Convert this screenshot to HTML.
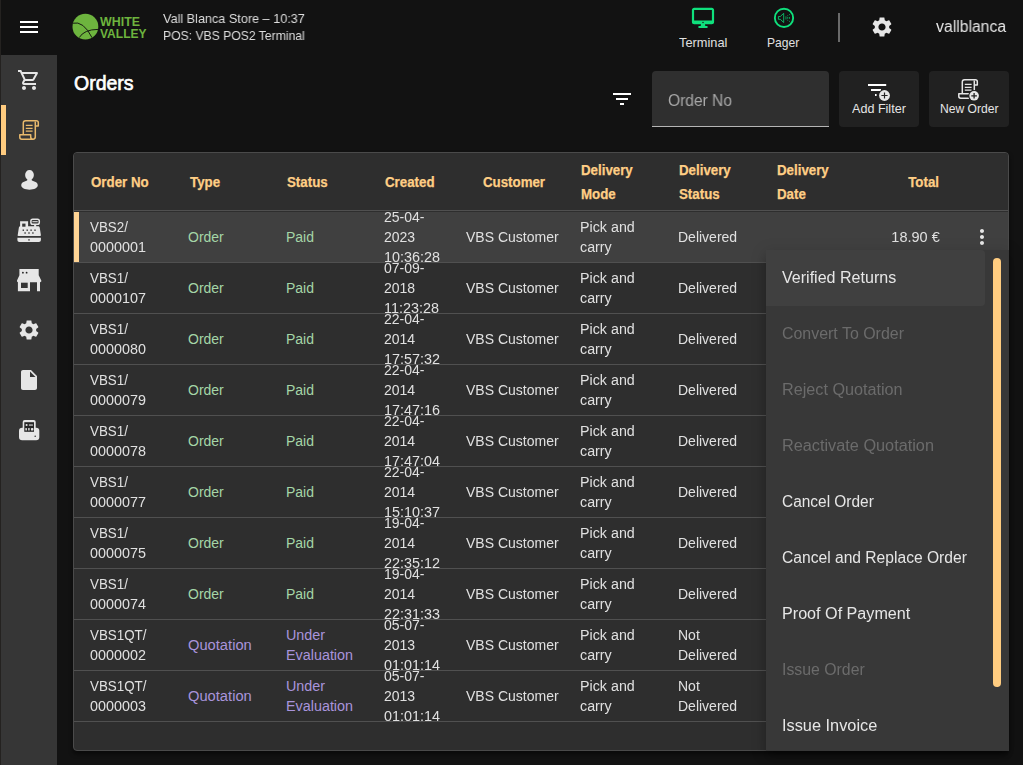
<!DOCTYPE html>
<html lang="en">
<head>
<meta charset="utf-8">
<title>Orders</title>
<style>
*{box-sizing:border-box;margin:0;padding:0}
html,body{width:1023px;height:765px;overflow:hidden;background:#121212}
body{position:relative;font-family:"Liberation Sans",sans-serif;color:#e0e0e0;font-size:14px;-webkit-font-smoothing:antialiased}
.abs{position:absolute}
.t{position:absolute;white-space:nowrap;line-height:1;transform-origin:0 50%}
svg{display:block}
/* sidebar */
#side{position:absolute;left:1px;top:55px;width:56px;height:710px;background:#363636}
#side .it{position:absolute;left:0;width:56px;height:50px}
#side .act{position:absolute;left:0;top:50px;width:5px;height:50px;background:#ffcc80}
/* top bar */
#edge{position:absolute;left:0;top:0;width:1px;height:765px;background:#242220}
/* card */
#card{position:absolute;left:73px;top:152px;width:936px;height:599px;background:#2e2e2e;border:1px solid #4a4a4a;border-radius:4px;box-shadow:0 3px 4px rgba(0,0,0,.5);overflow:hidden}
#hdr{position:absolute;left:0;top:0;width:934px;height:58px;background:#2e2e2e;border-bottom:1px solid #505050}
.h{position:absolute;color:#ffce85;-webkit-text-stroke:.25px #ffce85;font-weight:bold;font-size:14px;line-height:24px;white-space:nowrap;transform:scaleX(.95);transform-origin:0 50%}
#rows{position:absolute;left:0;top:0;width:934px;height:597px}
.gs{will-change:transform}
.row{position:absolute;left:0;width:934px;height:51px;border-bottom:1px solid #505050;overflow:hidden}
.row.sel{background:#404040}
.row.sel:before{content:"";position:absolute;left:0;top:0;width:5px;height:50px;background:#ffd494}
.c{position:absolute;top:0;height:50px;display:flex;align-items:center;line-height:20px;font-size:14px;white-space:nowrap}
.c>span{display:block}
.c u{display:block;text-decoration:none;transform-origin:0 50%}
.c u.l1{transform:scaleX(.955)}
.c u.l2{transform:scaleX(1.025)}
.c u.l3{transform:scaleX(1.028)}
.c{will-change:transform}
.c.g{color:#a5d6a7;will-change:auto}
.c.p{color:#a994dc;will-change:auto}
/* menu */
#menu{will-change:transform;position:absolute;left:766px;top:250px;width:243px;height:501px;background:#383838;box-shadow:0 5px 5px -3px rgba(0,0,0,.2),0 8px 10px 1px rgba(0,0,0,.14),0 3px 14px 2px rgba(0,0,0,.12);overflow:hidden}
#menu .mi{position:absolute;left:0;width:219px;height:56px;font-size:16px;line-height:56px;padding-left:16px;white-space:nowrap;color:#e6e6e6}
#menu .mi.d{color:#6b6b6b}
#menu .mi span{display:inline-block;transform-origin:0 50%}
#menu .mi.hv{background:#404040;border-radius:0 4px 4px 0}
#thumb{position:absolute;left:227px;top:8px;width:8px;height:429px;border-radius:4px;background:#ffcc80}
</style>
</head>
<body>
<div id="edge"></div>

<!-- TOPBAR -->
<svg class="abs" style="left:17px;top:15px" width="24" height="24" viewBox="0 0 24 24"><path fill="#fff" d="M3 18h18v-2H3v2zm0-5h18v-2H3v2zm0-7v2h18V6H3z"/></svg>
<!-- LOGO -->
<svg class="abs" id="logo" style="left:72px;top:13px" width="80" height="28" viewBox="0 0 80 28">
<circle cx="13.400" cy="13.650" r="12.900" fill="#6db43e"/>
<path d="M.5 10.200Q11.500 7.450 20.100 24.800M7.200 24.600Q12 16.500 26 16.400" fill="none" stroke="#161a12" stroke-width="1"/>
<text x="28" y="12.7" font-family="Liberation Sans, sans-serif" font-weight="bold" font-size="12.6" fill="#6db43e" textLength="40" lengthAdjust="spacingAndGlyphs">WHITE</text>
<text x="28" y="24.9" font-family="Liberation Sans, sans-serif" font-weight="bold" font-size="12.6" fill="#6db43e" textLength="46.5" lengthAdjust="spacingAndGlyphs">VALLEY</text>
</svg>
<div class="t gs" id="tb1" style="left:163.300px;top:12px;font-size:13px;color:#dedede;transform:scaleX(.973)">Vall Blanca Store – 10:37</div>
<div class="t gs" id="tb2" style="left:162.500px;top:29px;font-size:13px;color:#dedede;transform:scaleX(0.936)">POS: VBS POS2 Terminal</div>

<!-- terminal icon -->
<svg class="abs" id="ic-term" style="left:691px;top:6px" width="24" height="24" viewBox="0 0 24 24"><path fill="#0fe07c" fill-rule="evenodd" d="M3.200 1.800H20.800C22.100 1.800 23.100 2.800 23.100 4.100V15.900C23.100 17.200 22.100 18.200 20.800 18.200H14L14.300 20.100H15.700C16.300 20.100 16.700 20.500 16.700 21.100S16.300 22.100 15.700 22.100H8.300C7.700 22.100 7.300 21.700 7.300 21.100S7.700 20.100 8.300 20.100H9.700L10 18.200H3.200C1.900 18.200 .9 17.200 .9 15.900V4.100C.9 2.800 1.900 1.800 3.200 1.800ZM3.100 4.100V14.500H20.900V4.100ZM12 15.800A.7 .7 0 1 0 12 17.200A.7 .7 0 1 0 12 15.800Z"/></svg>
<div class="t" id="tterm" style="left:678.500px;top:36px;font-size:13px;color:#e0e0e0;transform:scaleX(0.984)">Terminal</div>
<!-- pager icon -->
<svg class="abs" id="ic-pager" style="left:773px;top:7px" width="22" height="22" viewBox="0 0 22 22"><circle cx="11" cy="10.900" r="9.150" fill="none" stroke="#0fe07c" stroke-width="1.900"/><path fill="none" stroke="#0cc46c" stroke-width=".9" stroke-linejoin="round" d="M5.400 9.500h1.900l3.400-3.200v9.200l-3.400-3.200H5.400z"/><g fill="#0aa85c"><rect x="12.500" y="9.300" width=".9" height="3.200"/><rect x="14.300" y="8.300" width=".9" height=".9"/><rect x="14.300" y="10" width=".9" height="1.800"/><rect x="14.300" y="12.800" width=".9" height=".9"/><rect x="16.100" y="7.200" width=".9" height=".9"/><rect x="16.100" y="10" width=".9" height="1.800"/><rect x="16.100" y="13.900" width=".9" height=".9"/></g></svg>
<div class="t" id="tpager" style="left:767px;top:36px;font-size:13px;color:#e0e0e0;transform:scaleX(0.93)">Pager</div>
<div class="abs" style="left:838px;top:13px;width:2px;height:29px;background:#6a6a6a"></div>
<svg class="abs" id="ic-gear" style="left:870px;top:15px" width="24" height="24" viewBox="0 0 24 24"><path fill="#e6e6e6" d="M19.14 12.94c.04-.3.06-.61.06-.94 0-.32-.02-.64-.07-.94l2.030-1.580c.18-.14.23-.41.12-.61l-1.920-3.320c-.12-.22-.37-.29-.59-.22l-2.390.96c-.5-.38-1.030-.7-1.620-.94l-.36-2.540c-.04-.24-.24-.41-.48-.41h-3.840c-.24 0-.43.17-.47.41l-.36 2.540c-.59.24-1.130.57-1.620.94l-2.390-.96c-.22-.08-.47 0-.59.22L2.740 8.870c-.12.21-.08.47.12.61l2.030 1.580c-.05.3-.09.63-.09.94s.02.64.07.94l-2.030 1.580c-.18.14-.23.41-.12.61l1.920 3.320c.12.22.37.29.59.22l2.390-.96c.5.38 1.030.7 1.620.94l.36 2.540c.05.24.24.41.48.41h3.840c.24 0 .44-.17.47-.41l.36-2.540c.59-.24 1.130-.56 1.620-.94l2.390.96c.22.08.47 0 .59-.22l1.920-3.320c.12-.22.07-.47-.12-.61l-2.010-1.580zM12 15.600c-1.980 0-3.600-1.620-3.600-3.600s1.620-3.600 3.600-3.600 3.600 1.620 3.600 3.600-1.620 3.600-3.600 3.600z"/></svg>
<div class="t gs" id="tuser" style="left:936px;top:19px;font-size:16px;color:#e6e6e6;transform:scaleX(0.986)">vallblanca</div>

<!-- SIDEBAR -->
<div id="side">
  <div class="act"></div>
  <!-- cart -->
  <svg class="abs" style="left:16px;top:13px" width="24" height="24" viewBox="0 0 24 24"><path fill="#e6e6e6" d="M15.550 13c.75 0 1.410-.41 1.750-1.030l3.580-6.490c.37-.66-.11-1.480-.87-1.480H5.210l-.94-2H1v2h2l3.600 7.590-1.350 2.440C4.520 15.370 5.480 17 7 17h12v-2H7l1.100-2h7.450zM6.160 6h12.150l-2.760 5H8.530L6.160 6zM7 18c-1.100 0-1.990.9-1.990 2S5.900 22 7 22s2-.9 2-2-.9-2-2-2zm10 0c-1.100 0-1.990.9-1.990 2s.89 2 1.990 2 2-.9 2-2-.9-2-2-2z"/></svg>
  <!-- orders scroll -->
  <svg class="abs" style="left:18px;top:65px" width="21" height="20" viewBox="0 0 21 20" fill="none" stroke="#e8b96c" stroke-width="1.500" stroke-linejoin="round"><path d="M4.3 14.2V3Q4.3 .8 6.500 .8H17.300Q19.300 .8 19.300 2.800V6H16.300" /><path d="M16.300 1.500V16.800Q16.300 19.200 14 19.200H2.700Q.8 19.200 .8 17.300V14.800H11.700V16.800Q11.700 19.200 14 19.200"/><path d="M6.800 5.400H13.600M6.800 8.300H13.600M6.800 11.200H13.600" stroke-width="1.3"/></svg>
  <!-- person -->
  <svg class="abs" style="left:16px;top:113px" width="24" height="24" viewBox="0 0 24 24"><path fill="#e6e6e6" transform="translate(12.500 .2) scale(.93 .985) translate(-12.500 0)" d="M12.500 1.800c2.700 0 4.700 2.100 4.700 4.900 0 2-.9 3.600-2.200 4.600-.3.300-.3.900.1 1.100l3.900 1.700c1.500.7 2.400 1.800 2.400 3.200 0 2.600-3.900 4.500-8.900 4.500s-8.900-1.900-8.900-4.500c0-1.400.9-2.500 2.400-3.200l3.900-1.700c.4-.2.400-.8.100-1.100-1.300-1-2.200-2.600-2.200-4.600 0-2.800 2-4.900 4.700-4.900z"/></svg>
  <!-- cash register -->
  <svg class="abs" style="left:16px;top:163px" width="24" height="24" viewBox="0 0 24 24">
    <rect x="13.900" y="1.300" width="8.400" height="4.900" rx="1.800" fill="none" stroke="#e6e6e6" stroke-width="1.500"/>
    <rect x="15.400" y="3.200" width="5.300" height="1" fill="#e6e6e6"/>
    <rect x="17.100" y="6.500" width="2.100" height="2.400" fill="#e6e6e6"/>
    <path fill="#e6e6e6" d="M3.100 3.200h8v6H3.100zM3.600 8.200h17.400c.9 0 1.500.5 1.700 1.300l1.200 7.500c.1.500-.2.900-.7.900H1.400c-.5 0-.8-.4-.7-.9l1.200-7.500c.2-.8.800-1.300 1.700-1.300zM.4 19.700h23.500v2.300c0 1.100-.9 2-2 2H2.400c-1.100 0-2-.9-2-2z"/>
    <g fill="#363636"><rect x="5.200" y="5.600" width="3.300" height="3.100"/><rect x="5.600" y="11.500" width="1.400" height="1.400"/><rect x="9.500" y="11.500" width="1.400" height="1.400"/><rect x="13.400" y="11.500" width="1.400" height="1.400"/><rect x="17.300" y="11.500" width="1.400" height="1.400"/><rect x="7.400" y="14.300" width="1.400" height="1.400"/><rect x="11.300" y="14.300" width="1.400" height="1.400"/><rect x="15.200" y="14.300" width="1.400" height="1.400"/><rect x="11.100" y="21.200" width="1.800" height="1.300" rx=".5"/></g>
  </svg>
  <!-- store -->
  <svg class="abs" style="left:16px;top:214px" width="25" height="23" viewBox="0 0 25 23">
    <path fill="#e6e6e6" d="M2.400 0H21.700V6.200L24.300 11.500V12.400L23.200 13.300H23V22.200H20V13.300H13V22.200H.9V13.300L0 12.400V11.500L2.400 6.200z"/>
    <rect x="4" y="13.700" width="6.700" height="5.300" fill="#363636"/>
    <circle cx="5.900" cy="3.700" r=".9" fill="#222"/><circle cx="9.600" cy="3.700" r=".9" fill="#222"/>
  </svg>
  <!-- settings -->
  <svg class="abs" style="left:16px;top:263px" width="24" height="24" viewBox="0 0 24 24"><path fill="#e6e6e6" d="M19.14 12.94c.04-.3.06-.61.06-.94 0-.32-.02-.64-.07-.94l2.030-1.580c.18-.14.23-.41.12-.61l-1.920-3.320c-.12-.22-.37-.29-.59-.22l-2.390.96c-.5-.38-1.030-.7-1.620-.94l-.36-2.540c-.04-.24-.24-.41-.48-.41h-3.840c-.24 0-.43.17-.47.41l-.36 2.540c-.59.24-1.130.57-1.620.94l-2.390-.96c-.22-.08-.47 0-.59.22L2.740 8.870c-.12.21-.08.47.12.61l2.030 1.580c-.05.3-.09.63-.09.94s.02.64.07.94l-2.030 1.580c-.18.14-.23.41-.12.61l1.920 3.320c.12.22.37.29.59.22l2.390-.96c.5.38 1.030.7 1.620.94l.36 2.540c.05.24.24.41.48.41h3.840c.24 0 .44-.17.47-.41l.36-2.540c.59-.24 1.130-.56 1.620-.94l2.390.96c.22.08.47 0 .59-.22l1.920-3.320c.12-.22.07-.47-.12-.61l-2.010-1.580zM12 15.600c-1.980 0-3.600-1.620-3.600-3.600s1.620-3.600 3.600-3.600 3.600 1.620 3.600 3.600-1.620 3.600-3.600 3.600z"/></svg>
  <!-- file -->
  <svg class="abs" style="left:16px;top:313px" width="24" height="24" viewBox="0 0 24 24"><path fill="#e6e6e6" d="M6 2c-1.100 0-1.990.9-1.990 2L4 20c0 1.100.89 2 1.990 2H18c1.100 0 2-.9 2-2V8l-6-6H6zm7 7V3.500L18.500 9H13z"/></svg>
  <!-- printer -->
  <svg class="abs" style="left:18px;top:365px" width="21" height="21" viewBox="0 0 21 21">
    <rect x="0" y="7.800" width="20.300" height="12.500" rx="3.200" fill="#e6e6e6"/>
    <rect x="3.700" y="0" width="13" height="12.500" rx="2" fill="#e6e6e6"/>
    <rect x="5.300" y="2.200" width="9.700" height="9.600" fill="#262626"/>
    <g fill="#e6e6e6"><circle cx="7.600" cy="5" r="1.050"/><rect x="9.900" y="4.500" width="4" height="1.100"/><rect x="6.400" y="7.900" width="1.500" height="2.700" rx=".6"/><rect x="9.200" y="7.900" width="1.400" height="2.700" rx=".5"/><rect x="11.900" y="7.900" width="2.500" height="2.700" rx=".9"/></g>
    <circle cx="16.200" cy="16.200" r=".8" fill="#363636"/>
  </svg>
</div>

<!-- TITLE + FILTER ROW -->
<div class="t" id="ttitle" style="left:73.600px;top:73px;font-size:20px;color:#fff;-webkit-text-stroke:.65px #fff;transform:scaleX(.975)">Orders</div>
<svg class="abs" style="left:610px;top:87px" width="24" height="24" viewBox="0 0 24 24"><path fill="#fff" d="M10 18h4v-2h-4v2zM3 6v2h18V6H3zm3 7h12v-2H6v2z"/></svg>
<div class="abs" style="left:652px;top:71px;width:177px;height:56px;background:#2f2f2f;border-radius:4px 4px 0 0;border-bottom:1px solid #b5b5b5"></div>
<div class="t gs" id="tph" style="left:668.300px;top:93px;font-size:16px;color:#a9a9a9;transform:scaleX(.972)">Order No</div>
<div class="abs" style="left:839px;top:71px;width:80px;height:56px;background:#212121;border-radius:4px"></div>
<div class="abs" style="left:929px;top:71px;width:80px;height:56px;background:#212121;border-radius:4px"></div>
<!-- add filter icon -->
<svg class="abs" style="left:866px;top:82px" width="26" height="22" viewBox="0 0 26 22">
  <rect x="2" y="2" width="18.200" height="2" fill="#fff"/>
  <rect x="5" y="7" width="10" height="2" fill="#fff"/>
  <rect x="9" y="12" width="1.600" height="2" fill="#fff"/>
  <circle cx="18.500" cy="13.500" r="6.500" fill="#212121"/>
  <circle cx="18.500" cy="13.500" r="5.400" fill="#e6e6e6"/>
  <path d="M15.400 13.500h6.200M18.500 10.400v6.200" stroke="#212121" stroke-width="1.200"/>
</svg>
<!-- new order icon -->
<svg class="abs" style="left:958px;top:79px" width="22" height="22" viewBox="0 0 22 22">
  <g fill="none" stroke="#e6e6e6" stroke-width="1.500" stroke-linejoin="round"><path d="M4.3 14.2V3Q4.3 .8 6.500 .8H17.300Q19.300 .8 19.300 2.800V6H16.300" /><path d="M16.300 1.500V16.800Q16.300 19.200 14 19.200H2.700Q.8 19.200 .8 17.300V14.800H11.700V16.800Q11.700 19.200 14 19.200"/><path d="M6.800 5.400H13.600M6.800 8.300H13.600M6.800 11.200H13.600" stroke-width="1.3"/></g>
  <circle cx="16.100" cy="16.800" r="5.900" fill="#212121"/>
  <circle cx="16.100" cy="16.800" r="4.800" fill="#e6e6e6"/>
  <path d="M13.300 16.800h5.600M16.100 14v5.600" stroke="#212121" stroke-width="1.300"/>
</svg>
<div class="t" id="taf" style="left:852px;top:102px;font-size:13px;color:#e6e6e6;transform:scaleX(.968)">Add Filter</div>
<div class="t" id="tno" style="left:939.5px;top:102px;font-size:13px;color:#e6e6e6;transform:scaleX(0.932)">New Order</div>

<!-- CARD -->
<div id="card">
  <div id="hdr">
    <div class="h" style="left:17px;top:17px">Order No</div>
    <div class="h" style="left:116px;top:17px">Type</div>
    <div class="h" style="left:213px;top:17px">Status</div>
    <div class="h" style="left:311px;top:17px">Created</div>
    <div class="h" style="left:391px;top:17px;width:98px;text-align:center;transform-origin:50% 50%">Customer</div>
    <div class="h" style="left:507px;top:5px">Delivery<br>Mode</div>
    <div class="h" style="left:605px;top:5px">Delivery<br>Status</div>
    <div class="h" style="left:703px;top:5px">Delivery<br>Date</div>
    <div class="h" style="left:783px;top:17px;width:82px;text-align:right;transform-origin:100% 50%">Total</div>
  </div>
  <div id="rows">
  <div class="row sel" style="top:59px">
    <div class="c" style="left:16px"><span><u class="l1">VBS2/</u><u class="l2">0000001</u></span></div>
    <div class="c g" style="left:114px"><span>Order</span></div>
    <div class="c g" style="left:212px"><span>Paid</span></div>
    <div class="c" style="left:310px"><span><u>25-04-</u><u>2023</u><u class="l3">10:36:28</u></span></div>
    <div class="c" style="left:392px"><span>VBS Customer</span></div>
    <div class="c" style="left:506px"><span style="transform:scaleX(1.02);transform-origin:0 50%">Pick and<br>carry</span></div>
    <div class="c" style="left:604px"><span>Delivered</span></div>
    <div class="c" style="left:784px;width:82px;justify-content:flex-end"><span style="transform:scaleX(1.035);transform-origin:100% 50%;margin-right:.5px">18.90 €</span></div>
    <svg class="abs" style="left:896px;top:13px" width="24" height="24" viewBox="0 0 24 24"><path fill="#e6e6e6" d="M12 8c1.1 0 2-.9 2-2s-.9-2-2-2-2 .9-2 2 .9 2 2 2zm0 2c-1.1 0-2 .9-2 2s.9 2 2 2 2-.9 2-2-.9-2-2-2zm0 6c-1.1 0-2 .9-2 2s.9 2 2 2 2-.9 2-2-.9-2-2-2z"/></svg>
  </div>
  <div class="row" style="top:110px">
    <div class="c" style="left:16px"><span><u class="l1">VBS1/</u><u class="l2">0000107</u></span></div>
    <div class="c g" style="left:114px"><span>Order</span></div>
    <div class="c g" style="left:212px"><span>Paid</span></div>
    <div class="c" style="left:310px"><span><u>07-09-</u><u>2018</u><u class="l3">11:23:28</u></span></div>
    <div class="c" style="left:392px"><span>VBS Customer</span></div>
    <div class="c" style="left:506px"><span style="transform:scaleX(1.02);transform-origin:0 50%">Pick and<br>carry</span></div>
    <div class="c" style="left:604px"><span>Delivered</span></div>
  </div>
  <div class="row" style="top:161px">
    <div class="c" style="left:16px"><span><u class="l1">VBS1/</u><u class="l2">0000080</u></span></div>
    <div class="c g" style="left:114px"><span>Order</span></div>
    <div class="c g" style="left:212px"><span>Paid</span></div>
    <div class="c" style="left:310px"><span><u>22-04-</u><u>2014</u><u class="l3">17:57:32</u></span></div>
    <div class="c" style="left:392px"><span>VBS Customer</span></div>
    <div class="c" style="left:506px"><span style="transform:scaleX(1.02);transform-origin:0 50%">Pick and<br>carry</span></div>
    <div class="c" style="left:604px"><span>Delivered</span></div>
  </div>
  <div class="row" style="top:212px">
    <div class="c" style="left:16px"><span><u class="l1">VBS1/</u><u class="l2">0000079</u></span></div>
    <div class="c g" style="left:114px"><span>Order</span></div>
    <div class="c g" style="left:212px"><span>Paid</span></div>
    <div class="c" style="left:310px"><span><u>22-04-</u><u>2014</u><u class="l3">17:47:16</u></span></div>
    <div class="c" style="left:392px"><span>VBS Customer</span></div>
    <div class="c" style="left:506px"><span style="transform:scaleX(1.02);transform-origin:0 50%">Pick and<br>carry</span></div>
    <div class="c" style="left:604px"><span>Delivered</span></div>
  </div>
  <div class="row" style="top:263px">
    <div class="c" style="left:16px"><span><u class="l1">VBS1/</u><u class="l2">0000078</u></span></div>
    <div class="c g" style="left:114px"><span>Order</span></div>
    <div class="c g" style="left:212px"><span>Paid</span></div>
    <div class="c" style="left:310px"><span><u>22-04-</u><u>2014</u><u class="l3">17:47:04</u></span></div>
    <div class="c" style="left:392px"><span>VBS Customer</span></div>
    <div class="c" style="left:506px"><span style="transform:scaleX(1.02);transform-origin:0 50%">Pick and<br>carry</span></div>
    <div class="c" style="left:604px"><span>Delivered</span></div>
  </div>
  <div class="row" style="top:314px">
    <div class="c" style="left:16px"><span><u class="l1">VBS1/</u><u class="l2">0000077</u></span></div>
    <div class="c g" style="left:114px"><span>Order</span></div>
    <div class="c g" style="left:212px"><span>Paid</span></div>
    <div class="c" style="left:310px"><span><u>22-04-</u><u>2014</u><u class="l3">15:10:37</u></span></div>
    <div class="c" style="left:392px"><span>VBS Customer</span></div>
    <div class="c" style="left:506px"><span style="transform:scaleX(1.02);transform-origin:0 50%">Pick and<br>carry</span></div>
    <div class="c" style="left:604px"><span>Delivered</span></div>
  </div>
  <div class="row" style="top:365px">
    <div class="c" style="left:16px"><span><u class="l1">VBS1/</u><u class="l2">0000075</u></span></div>
    <div class="c g" style="left:114px"><span>Order</span></div>
    <div class="c g" style="left:212px"><span>Paid</span></div>
    <div class="c" style="left:310px"><span><u>19-04-</u><u>2014</u><u class="l3">22:35:12</u></span></div>
    <div class="c" style="left:392px"><span>VBS Customer</span></div>
    <div class="c" style="left:506px"><span style="transform:scaleX(1.02);transform-origin:0 50%">Pick and<br>carry</span></div>
    <div class="c" style="left:604px"><span>Delivered</span></div>
  </div>
  <div class="row" style="top:416px">
    <div class="c" style="left:16px"><span><u class="l1">VBS1/</u><u class="l2">0000074</u></span></div>
    <div class="c g" style="left:114px"><span>Order</span></div>
    <div class="c g" style="left:212px"><span>Paid</span></div>
    <div class="c" style="left:310px"><span><u>19-04-</u><u>2014</u><u class="l3">22:31:33</u></span></div>
    <div class="c" style="left:392px"><span>VBS Customer</span></div>
    <div class="c" style="left:506px"><span style="transform:scaleX(1.02);transform-origin:0 50%">Pick and<br>carry</span></div>
    <div class="c" style="left:604px"><span>Delivered</span></div>
  </div>
  <div class="row" style="top:467px">
    <div class="c" style="left:16px"><span><u class="l1">VBS1QT/</u><u class="l2">0000002</u></span></div>
    <div class="c p" style="left:114px"><span style="transform:scaleX(1.05);transform-origin:0 50%">Quotation</span></div>
    <div class="c p" style="left:212px"><span style="transform:scaleX(1.025);transform-origin:0 50%">Under<br>Evaluation</span></div>
    <div class="c" style="left:310px"><span><u>05-07-</u><u>2013</u><u class="l3">01:01:14</u></span></div>
    <div class="c" style="left:392px"><span>VBS Customer</span></div>
    <div class="c" style="left:506px"><span style="transform:scaleX(1.02);transform-origin:0 50%">Pick and<br>carry</span></div>
    <div class="c" style="left:604px"><span>Not<br>Delivered</span></div>
  </div>
  <div class="row" style="top:518px">
    <div class="c" style="left:16px"><span><u class="l1">VBS1QT/</u><u class="l2">0000003</u></span></div>
    <div class="c p" style="left:114px"><span style="transform:scaleX(1.05);transform-origin:0 50%">Quotation</span></div>
    <div class="c p" style="left:212px"><span style="transform:scaleX(1.025);transform-origin:0 50%">Under<br>Evaluation</span></div>
    <div class="c" style="left:310px"><span><u>05-07-</u><u>2013</u><u class="l3">01:01:14</u></span></div>
    <div class="c" style="left:392px"><span>VBS Customer</span></div>
    <div class="c" style="left:506px"><span style="transform:scaleX(1.02);transform-origin:0 50%">Pick and<br>carry</span></div>
    <div class="c" style="left:604px"><span>Not<br>Delivered</span></div>
  </div>
</div>
</div>

<!-- MENU -->
<div id="menu">
  <div class="mi hv" style="top:0;padding-left:15.800px"><span style="transform:scaleX(1.003)">Verified Returns</span></div>
  <div class="mi d" style="top:56px;padding-left:16px"><span style="transform:scaleX(.996)">Convert To Order</span></div>
  <div class="mi d" style="top:112px;padding-left:15.5px"><span style="transform:scaleX(1.012)">Reject Quotation</span></div>
  <div class="mi d" style="top:168px;padding-left:15.5px"><span style="transform:scaleX(1.017)">Reactivate Quotation</span></div>
  <div class="mi" style="top:224px;padding-left:16.3px"><span style="transform:scaleX(0.965)">Cancel Order</span></div>
  <div class="mi" style="top:280px;padding-left:16.3px"><span style="transform:scaleX(0.976)">Cancel and Replace Order</span></div>
  <div class="mi" style="top:336px;padding-left:15.5px"><span style="transform:scaleX(1.009)">Proof Of Payment</span></div>
  <div class="mi d" style="top:392px;padding-left:15.5px"><span style="transform:scaleX(0.99)">Issue Order</span></div>
  <div class="mi" style="top:448px;padding-left:15.5px"><span style="transform:scaleX(1.02)">Issue Invoice</span></div>
  <div id="thumb"></div>
</div>
</body>
</html>
